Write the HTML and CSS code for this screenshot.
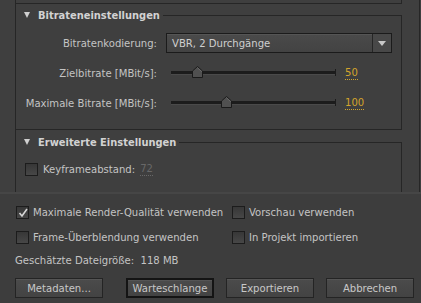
FILE: index.html
```html
<!DOCTYPE html>
<html lang="de">
<head>
<meta charset="utf-8">
<link rel="stylesheet" href="styles.css">
</head>
<body>
<div class="app">
  <div class="scroll">
    <div class="content">
      <div class="prev-end"></div>
      <section class="group">
        <div class="legend">
          <span class="tri"></span>
          <span class="title">Bitrateneinstellungen</span>
          <span class="rule"></span>
        </div>
        <div class="body">
          <div class="row">
            <span class="label">Bitratenkodierung:</span>
            <div class="select">
              <span class="select-text">VBR, 2 Durchgänge</span>
              <span class="select-btn"><span class="arrow"></span></span>
            </div>
          </div>
          <div class="row">
            <span class="label">Zielbitrate [MBit/s]:</span>
            <div class="slider">
              <div class="track">
                <svg class="thumb" style="left:21px" width="11" height="12" viewBox="0 0 11 12"><path d="M5.5 0.5 L10.5 5 L10.5 11.5 L0.5 11.5 L0.5 5 Z" fill="#505050" stroke="#1a1a1a"/><path d="M5.5 1.8 L9.5 5.4 L9.5 6" fill="none" stroke="#6a6a6a"/></svg>
              </div>
              <span class="value">50</span>
            </div>
          </div>
          <div class="row">
            <span class="label">Maximale Bitrate [MBit/s]:</span>
            <div class="slider">
              <div class="track">
                <svg class="thumb" style="left:50px" width="11" height="12" viewBox="0 0 11 12"><path d="M5.5 0.5 L10.5 5 L10.5 11.5 L0.5 11.5 L0.5 5 Z" fill="#505050" stroke="#1a1a1a"/><path d="M5.5 1.8 L9.5 5.4 L9.5 6" fill="none" stroke="#6a6a6a"/></svg>
              </div>
              <span class="value">100</span>
            </div>
          </div>
        </div>
      </section>
      <section class="group group2">
        <div class="legend">
          <span class="tri"></span>
          <span class="title">Erweiterte Einstellungen</span>
          <span class="rule"></span>
        </div>
        <div class="body body2">
          <div class="check-row">
            <span class="box"></span>
            <span class="check-label">Keyframeabstand:</span>
            <span class="value disabled">72</span>
          </div>
        </div>
      </section>
    </div>
    <div class="scrollbar"></div>
  </div>

  <div class="bottom">
    <div class="options">
      <label class="opt"><span class="box checked"><svg width="10" height="10" viewBox="0 0 10 10"><path d="M1.5 5 L4 8 L9 1" fill="none" stroke="#d6d6d6" stroke-width="1.6"/></svg></span><span>Maximale Render-Qualität verwenden</span></label>
      <label class="opt"><span class="box"></span><span>Vorschau verwenden</span></label>
      <label class="opt"><span class="box"></span><span>Frame-Überblendung verwenden</span></label>
      <label class="opt"><span class="box"></span><span>In Projekt importieren</span></label>
    </div>
    <div class="size">Geschätzte Dateigröße:&nbsp; 118 MB</div>
    <div class="buttons">
      <button class="btn">Metadaten...</button>
      <div class="btn-group">
        <button class="btn focused">Warteschlange</button>
        <button class="btn">Exportieren</button>
        <button class="btn">Abbrechen</button>
      </div>
    </div>
  </div>
</div>
</body>
</html>
```
FILE: styles.css
```css
html, body {
  margin: 0;
  padding: 0;
  background: #3f3f3f;
}
body {
  width: 421px;
  height: 303px;
  overflow: hidden;
  font-family: "DejaVu Sans Condensed", "DejaVu Sans", sans-serif;
  font-size: 11.2px;
  color: #c4c4c4;
}
.app {
  display: flex;
  flex-direction: column;
  height: 303px;
}
.scroll {
  display: flex;
  height: 192px;
  overflow: hidden;
  flex: none;
}
.content {
  margin-left: 15px;
  width: 386px;
  border-left: 1px solid #262626;
}
.prev-end {
  height: 3px;
  border-bottom: 1px solid #262626;
  border-right: 1px solid #262626;
}
.legend {
  display: flex;
  align-items: center;
  height: 22px;
}
.tri {
  width: 0;
  height: 0;
  margin-left: 8px;
  border-left: 3.5px solid transparent;
  border-right: 3.5px solid transparent;
  border-top: 6px solid #d0d0d0;
}
.title {
  margin-left: 8px;
  font-size: 11px;
  font-weight: bold;
  color: #d2d2d2;
}
.rule {
  flex: 1;
  align-self: flex-end;
  height: 10px;
  margin-left: 3px;
  border-top: 1px solid #262626;
  border-right: 1px solid #262626;
}
.body {
  border-right: 1px solid #262626;
  border-bottom: 1px solid #262626;
  padding: 2px 0 11px;
}
.row {
  display: grid;
  grid-template-columns: 141px 1fr;
  column-gap: 9px;
  align-items: center;
  height: 30px;
}
.label {
  text-align: right;
}
.select {
  display: flex;
  align-items: stretch;
  width: 224px;
  height: 18px;
  border: 1px solid #1b1b1b;
  background: linear-gradient(#4a4a4a, #434343);
  box-shadow: inset 0 1px 0 #555;
}
.select-text {
  flex: 1;
  display: flex;
  align-items: center;
  padding-left: 5px;
  color: #cfcfcf;
}
.select-btn {
  width: 18px;
  border-left: 1px solid #262626;
  display: flex;
  align-items: center;
  justify-content: center;
  background: #484848;
}
.arrow {
  width: 0;
  height: 0;
  border-left: 4px solid transparent;
  border-right: 4px solid transparent;
  border-top: 5px solid #c8c8c8;
}
.slider {
  display: flex;
  align-items: center;
  padding-left: 5px;
}
.track {
  position: relative;
  width: 164px;
  height: 3px;
  background: #1c1c1c;
  border-bottom: 1px solid #4a4a4a;
  border-right: 1px solid #1c1c1c;
}
.track::after {
  content: "";
  position: absolute;
  right: -1px;
  top: -2px;
  width: 1px;
  height: 7px;
  background: #1c1c1c;
}
.thumb {
  position: absolute;
  top: -5px;
}
.value {
  margin-left: 9px;
  color: #d3a42c;
  border-bottom: 1px dotted #d3a42c;
  line-height: 12px;
}
.value.disabled {
  color: #686868;
  border-bottom-color: #686868;
  margin-left: 5px;
}
.group2 {
  margin-top: 1px;
}
.body2 {
  padding: 1px 0 0;
  height: 60px;
}
.check-row {
  display: flex;
  align-items: center;
  height: 30px;
  padding-left: 9px;
}
.box {
  width: 11px;
  height: 11px;
  border: 1px solid #1c1c1c;
  background: linear-gradient(#373737, #474747);
  flex: none;
  display: flex;
  align-items: center;
  justify-content: center;
}
.check-label {
  margin-left: 5px;
}
.scrollbar {
  width: 17px;
  border-right: 1px solid #262626;
}
.bottom {
  flex: 1;
  border-top: 2px solid #464646;
  background: #3d3d3d;
  padding: 0 7px 0 15px;
}
.options {
  display: grid;
  grid-template-columns: 216px 1fr;
  grid-auto-rows: 25px;
  align-items: center;
  padding-top: 6px;
}
.opt {
  display: flex;
  align-items: center;
  gap: 4px;
  padding-left: 1px;
}
.size {
  height: 22px;
  line-height: 22px;
}
.buttons {
  display: flex;
  justify-content: space-between;
  margin-top: 6px;
}
.btn-group {
  display: flex;
  gap: 12px;
}
.btn {
  width: 88px;
  height: 20px;
  padding: 0;
  font-family: inherit;
  font-size: 11.2px;
  color: #c8c8c8;
  border: 1px solid #242424;
  background: linear-gradient(#4b4b4b, #434343);
  box-shadow: inset 0 1px 0 #555;
}
.btn.focused {
  border: 2px solid #141414;
}
```
